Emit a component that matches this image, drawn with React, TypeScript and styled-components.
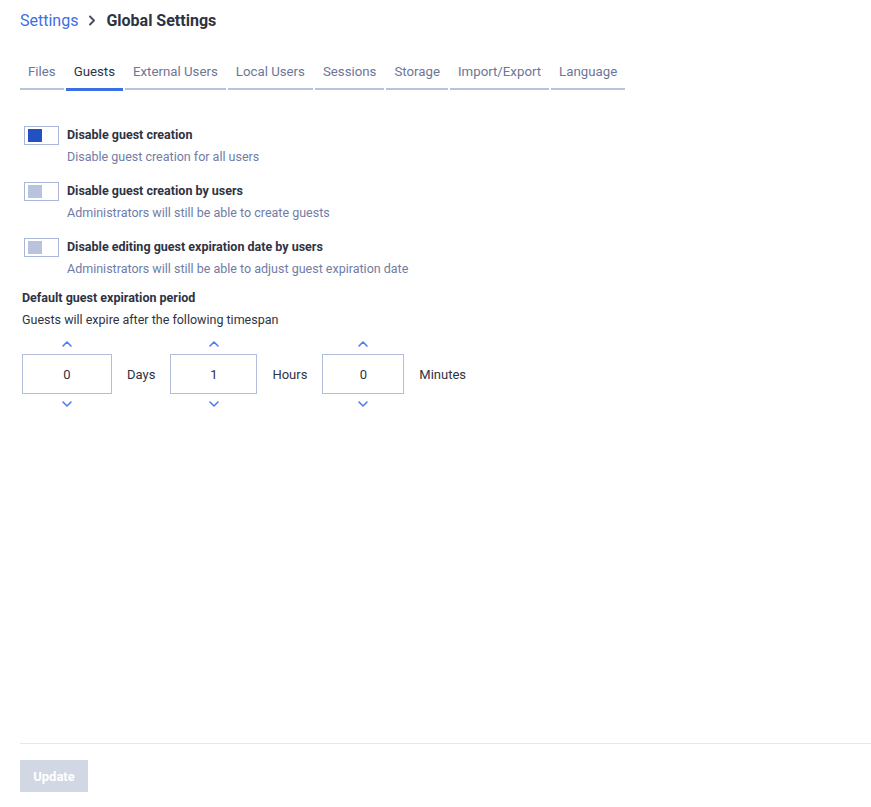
import React, { useState } from "react";
import styled, { createGlobalStyle } from "styled-components";

const GlobalStyle = createGlobalStyle`
  html, body { margin: 0; padding: 0; background: #ffffff; }
  body { font-family: Roboto, "Liberation Sans", sans-serif; color: #2d3142; }
  * { box-sizing: border-box; }
`;

const Page = styled.div`
  width: 871px;
  height: 807px;
  display: flex;
  flex-direction: column;
  padding: 10px 0 15px 20px;
`;

const Breadcrumb = styled.div`
  display: flex;
  align-items: center;
  height: 20px;
  font-size: 16px;
`;

const CrumbLink = styled.span`
  color: #3d6fe4;
`;

const CrumbSep = styled.span`
  display: inline-flex;
  margin: 0 10px 0 10px;
  color: #4a5066;
`;

const CrumbCurrent = styled.span`
  font-weight: 700;
  color: #2e3344;
`;

const Tabs = styled.div`
  display: flex;
  gap: 2px;
  margin-top: 32px;
`;

const Tab = styled.div<{ $active?: boolean }>`
  padding: 2px 8px 9px;
  font-size: 13.25px;
  color: ${(p) => (p.$active ? "#2e3344" : "#6c7698")};
  border-bottom: ${(p) => (p.$active ? "3px solid #3d6fe4" : "2px solid #b9c3de")};
  margin-bottom: ${(p) => (p.$active ? "0" : "1px")};
`;

const Content = styled.div`
  flex: 1;
  padding-top: 35px;
  padding-right: 20px;
`;

const OptionRow = styled.div`
  display: flex;
  gap: 8px;
  padding-left: 4px;
  margin-bottom: 18px;
`;

const Toggle = styled.button<{ $on?: boolean }>`
  width: 35px;
  height: 19px;
  border: 1px solid #aab6da;
  background: #fff;
  padding: 0 0 0 3px;
  display: flex;
  align-items: center;
  cursor: pointer;
  flex-shrink: 0;
  &::before {
    content: "";
    width: 14px;
    height: 13px;
    background: ${(p) => (p.$on ? "#2550c4" : "#b9c3de")};
  }
`;

const OptionText = styled.div`
  display: flex;
  flex-direction: column;
  gap: 7px;
  padding-top: 1px;
`;

const OptionTitle = styled.div`
  font-size: 12.5px;
  font-weight: 700;
  color: #2e3344;
`;

const OptionDesc = styled.div`
  font-size: 12.5px;
  color: #6f7ca6;
`;

const Period = styled.div`
  padding-left: 2px;
`;

const SectionTitle = styled.div`
  font-size: 12.5px;
  font-weight: 700;
  color: #2e3344;
  margin-top: -4px;
`;

const SectionDesc = styled.div`
  font-size: 12.5px;
  color: #2e3344;
  margin-top: 7px;
`;

const Spans = styled.div`
  display: flex;
  align-items: center;
  margin-top: 7px;
`;

const Spinner = styled.div`
  display: flex;
  flex-direction: column;
  align-items: center;
`;

const Arrow = styled.button`
  border: 0;
  background: none;
  padding: 0;
  height: 20px;
  display: flex;
  align-items: center;
  justify-content: center;
  color: #4d7cf0;
  cursor: pointer;
`;

const NumberBox = styled.div<{ $w: number }>`
  width: ${(p) => p.$w}px;
  height: 40px;
  border: 1px solid #b3bedd;
  display: flex;
  align-items: center;
  justify-content: center;
  font-size: 13px;
  color: #2e3344;
`;

const Unit = styled.span`
  font-size: 13px;
  color: #2e3344;
  margin: 0 15px 0 15px;
`;

const Footer = styled.div`
  border-top: 1px solid #e8e8ea;
  padding-top: 16px;
`;

const UpdateButton = styled.button`
  width: 68px;
  height: 32px;
  border: 0;
  background: #d1d7e3;
  color: #ffffff;
  font-family: inherit;
  font-weight: 700;
  font-size: 13px;
`;

const Up = () => (
  <svg width="12" height="8" viewBox="0 0 12 8" fill="none">
    <path d="M2 6l4-4 4 4" stroke="currentColor" strokeWidth="1.6" strokeLinecap="round" strokeLinejoin="round" />
  </svg>
);

const Down = () => (
  <svg width="12" height="8" viewBox="0 0 12 8" fill="none">
    <path d="M2 2l4 4 4-4" stroke="currentColor" strokeWidth="1.6" strokeLinecap="round" strokeLinejoin="round" />
  </svg>
);

const Chevron = () => (
  <svg width="8" height="11" viewBox="0 0 8 11" fill="none">
    <path d="M2 1.5l4 4-4 4" stroke="currentColor" strokeWidth="2" strokeLinecap="round" strokeLinejoin="round" />
  </svg>
);

const tabs = ["Files", "Guests", "External Users", "Local Users", "Sessions", "Storage", "Import/Export", "Language"];

const options = [
  { title: "Disable guest creation", desc: "Disable guest creation for all users", on: true },
  { title: "Disable guest creation by users", desc: "Administrators will still be able to create guests", on: false },
  {
    title: "Disable editing guest expiration date by users",
    desc: "Administrators will still be able to adjust guest expiration date",
    on: false,
  },
];

export default function App() {
  const [flags, setFlags] = useState(options.map((o) => o.on));
  const [span, setSpan] = useState([0, 1, 0]);
  const units = [
    { label: "Days", w: 90 },
    { label: "Hours", w: 87 },
    { label: "Minutes", w: 82 },
  ];

  const step = (i: number, d: number) =>
    setSpan((s) => s.map((v, j) => (j === i ? Math.max(0, v + d) : v)));

  return (
    <>
      <GlobalStyle />
      <Page>
        <Breadcrumb>
          <CrumbLink>Settings</CrumbLink>
          <CrumbSep>
            <Chevron />
          </CrumbSep>
          <CrumbCurrent>Global Settings</CrumbCurrent>
        </Breadcrumb>
        <Tabs>
          {tabs.map((t) => (
            <Tab key={t} $active={t === "Guests"}>
              {t}
            </Tab>
          ))}
        </Tabs>
        <Content>
          {options.map((o, i) => (
            <OptionRow key={o.title}>
              <Toggle
                $on={flags[i]}
                onClick={() => setFlags((f) => f.map((v, j) => (j === i ? !v : v)))}
              />
              <OptionText>
                <OptionTitle>{o.title}</OptionTitle>
                <OptionDesc>{o.desc}</OptionDesc>
              </OptionText>
            </OptionRow>
          ))}
          <Period>
            <SectionTitle>Default guest expiration period</SectionTitle>
            <SectionDesc>Guests will expire after the following timespan</SectionDesc>
            <Spans>
              {units.map((u, i) => (
                <React.Fragment key={u.label}>
                  <Spinner>
                    <Arrow onClick={() => step(i, 1)}>
                      <Up />
                    </Arrow>
                    <NumberBox $w={u.w}>{span[i]}</NumberBox>
                    <Arrow onClick={() => step(i, -1)}>
                      <Down />
                    </Arrow>
                  </Spinner>
                  <Unit>{u.label}</Unit>
                </React.Fragment>
              ))}
            </Spans>
          </Period>
        </Content>
        <Footer>
          <UpdateButton>Update</UpdateButton>
        </Footer>
      </Page>
    </>
  );
}
